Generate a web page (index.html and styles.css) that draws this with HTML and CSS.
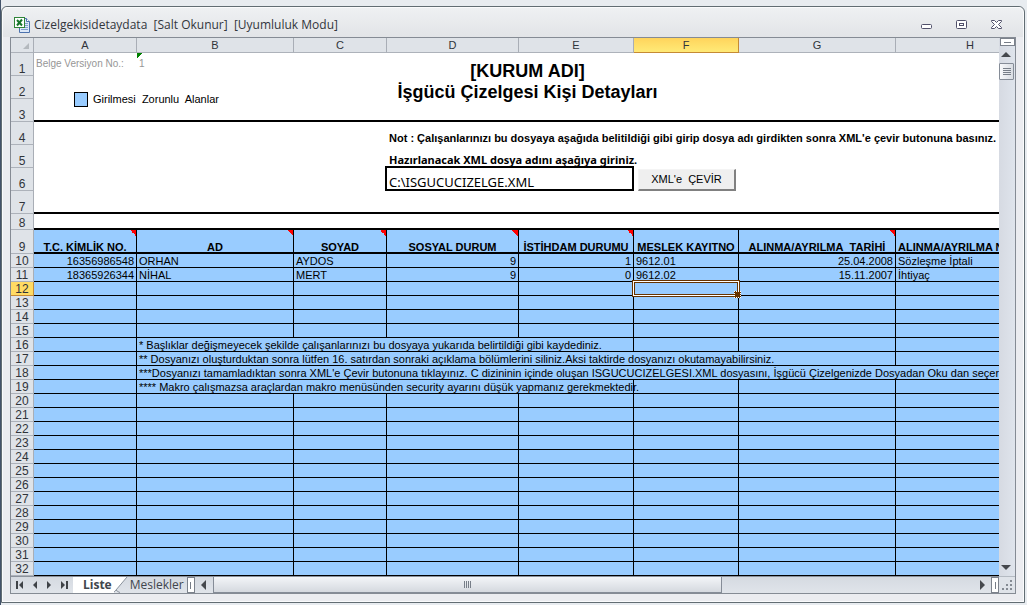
FILE: index.html
```html
<!DOCTYPE html>
<html lang="tr">
<head>
<meta charset="utf-8">
<title>Cizelgekisidetaydata</title>
<link rel="stylesheet" href="styles.css">
</head>
<body>
<main class="window">
  <header class="titlebar">
    <svg class="app-icon" width="16" height="16" viewBox="0 0 16 16" aria-hidden="true">
      <path d="M5.500 1.500H12.500L15.500 4.500V15.500H5.500Z" fill="#dce8f8" stroke="#4c72ad"/>
      <path d="M12.500 1.500V4.500H15.500" fill="#fff" stroke="#4c72ad"/>
      <path d="M11 6.500H14M11 8.500H14M11 10.500H14M7 12.500H14" stroke="#7f9fce"/>
      <rect x=".5" y=".5" width="10" height="10" fill="#fff" stroke="#2f8538"/>
      <path d="M3 3L8 8.500M8 2.500L3 8.500" stroke="#16762a" stroke-width="2"/>
    </svg>
    <h1 class="caption">Cizelgekisidetaydata&nbsp; [Salt Okunur]&nbsp; [Uyumluluk Modu]</h1>
    <div class="window-buttons">
      <button aria-label="Simge durumuna küçült"><svg width="13" height="11" viewBox="0 0 13 11"><rect x="1.500" y="5.500" width="10" height="4" rx="1" fill="#fff" stroke="#50506a"/></svg></button>
      <button aria-label="Önceki boyut"><svg width="13" height="11" viewBox="0 0 13 11"><rect x="1.500" y="1.500" width="10" height="8" rx="1" fill="#fff" stroke="#50506a"/><rect x="4.500" y="4.500" width="4" height="2" fill="#fff" stroke="#50506a"/></svg></button>
      <button aria-label="Kapat"><svg width="13" height="11" viewBox="0 0 13 11"><path d="M1.500 1.500H4.500L6.500 3.500L8.500 1.500H11.500V2.500L8.500 5.500L11.500 8.500V9.500H8.500L6.500 7.500L4.500 9.500H1.500V8.500L4.500 5.500L1.500 2.500Z" fill="#fff" stroke="#50506a"/></svg></button>
    </div>
  </header>

  <section class="workbook">
    <div class="sheet">
      <table class="grid">
        <colgroup><col class="w-num"><col class="w-a"><col class="w-b"><col class="w-c"><col class="w-d"><col class="w-e"><col class="w-f"><col class="w-g"><col class="w-h"></colgroup>
        <thead>
          <tr><th class="corner"><svg width="6" height="6" viewBox="0 0 6 6"><path d="M6 0V6H0Z" fill="#b4b9be"/></svg></th><th>A</th><th>B</th><th>C</th><th>D</th><th>E</th><th class="active">F</th><th>G</th><th>H</th></tr>
        </thead>
        <tbody class="form">
          <tr><th>1</th><td class="version">Belge Versiyon No.:</td><td class="version flagged">1</td><td class="title" colspan="4" rowspan="3">[KURUM ADI]<br>İşgücü Çizelgesi Kişi Detayları</td><td colspan="2"></td></tr>
          <tr><th>2</th><td colspan="2" rowspan="2" class="legend-cell ruled"><div class="legend"><span class="swatch"></span>Girilmesi&nbsp; Zorunlu&nbsp; Alanlar</div></td><td colspan="2"></td></tr>
          <tr class="ruled"><th>3</th><td colspan="2"></td></tr>
          <tr><th>4</th><td colspan="3"></td><td colspan="5" class="note">Not : Çalışanlarınızı bu dosyaya aşağıda belitildiği gibi girip dosya adı girdikten sonra XML'e çevir butonuna basınız.</td></tr>
          <tr><th>5</th><td colspan="3"></td><td colspan="5" class="prompt"><label for="file">Hazırlanacak XML dosya adını aşağıya giriniz.</label></td></tr>
          <tr><th>6</th><td colspan="3"></td><td colspan="2" class="file-cell"><input id="file" class="file" value="C:\ISGUCUCIZELGE.XML"></td><td colspan="3" class="action-cell"><button class="convert">XML'e&nbsp; ÇEVİR</button></td></tr>
          <tr class="ruled"><th>7</th><td colspan="8"></td></tr>
          <tr class="ruled short"><th>8</th><td colspan="8"></td></tr>
        </tbody>
        <tbody class="data">
          <tr class="fields"><th>9</th><td class="comment">T.C. KİMLİK NO.</td><td class="comment">AD</td><td class="comment">SOYAD</td><td class="comment">SOSYAL DURUM</td><td class="comment">İSTİHDAM DURUMU</td><td>MESLEK KAYITNO</td><td class="comment">ALINMA/AYRILMA&nbsp; TARİHİ</td><td class="start">ALINMA/AYRILMA NEDENİ</td></tr>
          <tr><th>10</th><td class="num">16356986548</td><td>ORHAN</td><td>AYDOS</td><td class="num">9</td><td class="num">1</td><td>9612.01</td><td class="num">25.04.2008</td><td>Sözleşme İptali</td></tr>
          <tr><th>11</th><td class="num">18365926344</td><td>NİHAL</td><td>MERT</td><td class="num">9</td><td class="num">0</td><td>9612.02</td><td class="num">15.11.2007</td><td>İhtiyaç</td></tr>
          <tr><th class="active">12</th><td></td><td></td><td></td><td></td><td></td><td class="selected"></td><td></td><td></td></tr>
          <tr><th>13</th><td></td><td></td><td></td><td></td><td></td><td></td><td></td><td></td></tr>
          <tr><th>14</th><td></td><td></td><td></td><td></td><td></td><td></td><td></td><td></td></tr>
          <tr><th>15</th><td></td><td></td><td></td><td></td><td></td><td></td><td></td><td></td></tr>
          <tr><th>16</th><td></td><td colspan="4">* Başlıklar değişmeyecek şekilde çalışanlarınızı bu dosyaya yukarıda belirtildiği gibi kaydediniz.</td><td></td><td></td><td></td></tr>
          <tr><th>17</th><td></td><td colspan="6">** Dosyanızı oluşturduktan sonra lütfen 16. satırdan sonraki açıklama bölümlerini siliniz.Aksi taktirde dosyanızı okutamayabilirsiniz.</td><td></td></tr>
          <tr><th>18</th><td></td><td colspan="7">***Dosyanızı tamamladıktan sonra XML'e Çevir butonuna tıklayınız. C dizininin içinde oluşan ISGUCUCIZELGESI.XML dosyasını, İşgücü Çizelgenizde Dosyadan Oku dan seçerek okutunuz.</td></tr>
          <tr><th>19</th><td></td><td colspan="4">**** Makro çalışmazsa araçlardan makro menüsünden security ayarını düşük yapmanız gerekmektedir.</td><td></td><td></td><td></td></tr>
          <tr><th>20</th><td></td><td></td><td></td><td></td><td></td><td></td><td></td><td></td></tr>
          <tr><th>21</th><td></td><td></td><td></td><td></td><td></td><td></td><td></td><td></td></tr>
          <tr><th>22</th><td></td><td></td><td></td><td></td><td></td><td></td><td></td><td></td></tr>
          <tr><th>23</th><td></td><td></td><td></td><td></td><td></td><td></td><td></td><td></td></tr>
          <tr><th>24</th><td></td><td></td><td></td><td></td><td></td><td></td><td></td><td></td></tr>
          <tr><th>25</th><td></td><td></td><td></td><td></td><td></td><td></td><td></td><td></td></tr>
          <tr><th>26</th><td></td><td></td><td></td><td></td><td></td><td></td><td></td><td></td></tr>
          <tr><th>27</th><td></td><td></td><td></td><td></td><td></td><td></td><td></td><td></td></tr>
          <tr><th>28</th><td></td><td></td><td></td><td></td><td></td><td></td><td></td><td></td></tr>
          <tr><th>29</th><td></td><td></td><td></td><td></td><td></td><td></td><td></td><td></td></tr>
          <tr><th>30</th><td></td><td></td><td></td><td></td><td></td><td></td><td></td><td></td></tr>
          <tr><th>31</th><td></td><td></td><td></td><td></td><td></td><td></td><td></td><td></td></tr>
          <tr><th>32</th><td></td><td></td><td></td><td></td><td></td><td></td><td></td><td></td></tr>
        </tbody>
      </table>
    </div>

    <div class="vscroll">
      <span class="vsplit"></span>
      <button class="varrow" aria-label="Yukarı"><svg width="10" height="5" viewBox="0 0 10 5"><path d="M0 5L5 0L10 5Z" fill="#45484d"/></svg></button>
      <div class="vtrack"><div class="vthumb"><i></i><i></i><i></i><i></i></div></div>
      <button class="varrow" aria-label="Aşağı"><svg width="10" height="5" viewBox="0 0 10 5"><path d="M0 0L5 5L10 0Z" fill="#45484d"/></svg></button>
    </div>

    <footer class="bottom">
      <nav class="tab-nav">
        <button aria-label="İlk sayfa"><svg width="8" height="8" viewBox="0 0 8 8"><path d="M1 0V8" stroke="#3f4348" stroke-width="2"/><path d="M7 0V8L3 4Z" fill="#3f4348"/></svg></button>
        <button aria-label="Önceki sayfa"><svg width="8" height="8" viewBox="0 0 8 8"><path d="M6 0V8L2 4Z" fill="#3f4348"/></svg></button>
        <button aria-label="Sonraki sayfa"><svg width="8" height="8" viewBox="0 0 8 8"><path d="M2 0V8L6 4Z" fill="#3f4348"/></svg></button>
        <button aria-label="Son sayfa"><svg width="8" height="8" viewBox="0 0 8 8"><path d="M1 0V8L5 4Z" fill="#3f4348"/><path d="M7 0V8" stroke="#3f4348" stroke-width="2"/></svg></button>
      </nav>
      <button class="tab current">Liste</button>
      <svg class="slant" width="14" height="16" viewBox="0 0 14 16" aria-hidden="true"><path d="M0 0H13L2 13L0 15Z" fill="#fff"/><path d="M13 0L2 13Q1 14.500 0 15M2 13Q4 15 6 15.500" fill="none" stroke="#8b929c"/></svg>
      <button class="tab">Meslekler</button>
      <span class="hsplit"></span>
      <button class="harrow" aria-label="Sola"><svg width="5" height="10" viewBox="0 0 5 10"><path d="M5 0V10L0 5Z" fill="#45484d"/></svg></button>
      <div class="htrack"><div class="hthumb"><i></i><i></i><i></i><i></i></div></div>
      <button class="harrow" aria-label="Sağa"><svg width="5" height="10" viewBox="0 0 5 10"><path d="M0 0V10L5 5Z" fill="#45484d"/></svg></button>
      <span class="hsplit"></span>
    </footer>
    <div class="grip"><svg width="12" height="12" viewBox="0 0 12 12"><path d="M9 1h2v2h-2zM5 5h2v2h-2zM9 5h2v2h-2zM1 9h2v2h-2zM5 9h2v2h-2zM9 9h2v2h-2z" fill="#858b93"/></svg></div>
  </section>
</main>
</body>
</html>
```

FILE: styles.css
```css
* { box-sizing: border-box; }

body {
  margin: 0;
  padding: 6px 2px 2px 0;
  border-left: 1px solid #43536a;
  background: #e8ecf0;
  font: 11px/13px "Liberation Sans", Arial, sans-serif;
  color: #000;
}

button {
  margin: 0;
  padding: 0;
  border: 0;
  background: none;
  font: inherit;
  color: inherit;
}

svg { display: block; }

.window {
  padding: 0 8px 8px;
  border: 1px solid #626d73;
  border-radius: 6px 6px 0 0;
  background: #ebecf0;
  box-shadow: inset 0 0 0 1px #fafbfc;
}

/* Title bar */
.titlebar {
  display: flex;
  align-items: center;
  gap: 4px;
  height: 30px;
  margin: 0 -7px;
  padding: 5px 20px 0 11px;
  border-radius: 5px 5px 0 0;
  background: linear-gradient(#eff1f3, #e2e4e7);
  box-shadow: inset 0 1px #fafbfc;
}

.caption {
  flex: 1;
  margin: 0;
  font: 12px/16px "Open Sans", "Noto Sans", sans-serif;
  color: #32363c;
  white-space: nowrap;
}

.window-buttons { display: flex; gap: 22px; }

/* Workbook frame */
.workbook {
  display: grid;
  grid-template-columns: minmax(0, 1fr) 16px;
  border: 1px solid #858b94;
  background: #dfe3e9;
}

.sheet { overflow: hidden; background: #fff; }

.grid {
  width: 1034px;
  table-layout: fixed;
  border-collapse: separate;
  border-spacing: 0;
}

.w-num { width: 23px; }
.w-a { width: 103px; }
.w-b, .w-g { width: 157px; }
.w-c { width: 93px; }
.w-d { width: 132px; }
.w-e { width: 115px; }
.w-f { width: 105px; }
.w-h { width: 149px; }

.grid th {
  height: 14px;
  padding: 0;
  border-right: 1px solid #a9aeb6;
  border-bottom: 1px solid #adb2ba;
  background: #dfe3e8;
  font-size: 12px;
  font-weight: normal;
  line-height: 11px;
  color: #30343a;
  vertical-align: bottom;
}

.grid thead th { height: 15px; font-size: 11px; line-height: 14px; }
.grid .corner { padding: 0 4px 3px 0; }
.corner svg { margin-left: auto; }
.grid th.active {
  border-color: #c58a35;
  background: linear-gradient(#ffd45c, #ffea77);
}
.grid tbody th.active { background: #ffdb64; }

.grid td { padding: 0 2px; line-height: 11px; white-space: nowrap; vertical-align: bottom; }

/* Form area */
.form th { height: 23px; }
.form .short th { height: 16px; }
.form .ruled td, .form td.ruled { border-bottom: 2px solid #000; }
.form td.version { padding-bottom: 7px; color: #969696; font-size: 10px; }
.form td.flagged { background: linear-gradient(to bottom right, #008000 50%, transparent 50%) 0 0 / 6px 6px no-repeat; }

.form td.title {
  padding: 8px 0 0 22px;
  border-bottom: 2px solid #000;
  font-size: 18px;
  font-weight: bold;
  line-height: 21px;
  text-align: center;
  vertical-align: top;
}

.form td.legend-cell { padding: 3px 0 0 40px; vertical-align: middle; }
.legend { display: flex; align-items: center; gap: 5px; }
.swatch { width: 14px; height: 15px; border: 1px solid #000; background: #99ccff; }

.form td.note { padding-bottom: 1px; font-weight: bold; }
.form td.prompt { padding-bottom: 2px; font: bold 11px/13px "Noto Sans", "Open Sans", sans-serif; }

.form td.file-cell { padding: 0; }
.file {
  display: block;
  width: 249px;
  height: 25px;
  margin: -2px 0 0 -2px;
  padding: 6px 2px 0;
  border: 2px solid #000;
  border-radius: 0;
  background: #fff;
  font: 13px/16px "Noto Sans", "Open Sans", sans-serif;
  color: #000;
}

.form td.action-cell { padding: 0 0 0 4px; }
.convert {
  display: block;
  width: 98px;
  height: 22px;
  border: 1px solid #f4f4f4;
  border-right: 2px solid #808080;
  border-bottom: 2px solid #808080;
  background: #efefef;
}

/* Data area */
.data td {
  border-right: 1px solid #000;
  border-bottom: 1px solid #000;
  background-color: #99ccff;
}
.data .num { text-align: right; }
.data .fields th { height: 24px; }
.data .fields td {
  border-bottom-width: 2px;
  font-weight: bold;
  line-height: 10px;
  text-align: center;
}
.data .fields .start { text-align: left; }
.data .comment {
  background-image: linear-gradient(to bottom left, #ff0000 50%, transparent 50%);
  background-position: top right;
  background-size: 6px 6px;
  background-repeat: no-repeat;
}

.selected { position: relative; }
.selected::before {
  content: "";
  position: absolute;
  inset: -2px;
  border: 1px solid #663300;
  box-shadow: inset 0 0 0 1px #fff, inset 0 0 0 2px #663300;
}
.selected::after {
  content: "";
  position: absolute;
  right: -3px;
  bottom: -3px;
  width: 5px;
  height: 5px;
  border: 1px dotted #fff;
  background: #663300;
}

/* Vertical scroll bar */
.vscroll {
  display: flex;
  flex-direction: column;
  align-items: center;
  background: linear-gradient(90deg, #d6dae2, #dfe4ec);
}
.vsplit {
  width: 15px;
  height: 8px;
  border: 1px solid #7c828c;
  background: linear-gradient(#777d87, #777d87) center / 7px 1px no-repeat #fff;
}
.varrow { padding: 6px 0; margin-right: 2px; }
.vtrack { flex: 1; align-self: stretch; }
.vthumb {
  display: flex;
  flex-direction: column;
  align-items: center;
  justify-content: center;
  gap: 1px;
  width: 15px;
  height: 17px;
  border: 1px solid #858c97;
  border-radius: 1px;
  background: linear-gradient(90deg, #f7f8fa, #d9dde3);
}
.vthumb i { width: 8px; height: 1px; background: #777e88; }

/* Tabs and horizontal scroll bar */
.bottom {
  display: flex;
  align-items: stretch;
  height: 17px;
  border-top: 1px solid #8b929c;
  background: linear-gradient(#d5dae1, #e0e4ea);
}
.tab-nav {
  display: flex;
  align-items: center;
  justify-content: space-between;
  width: 62px;
  padding: 0 5px;
}
.tab {
  padding: 0 3px 0 2px;
  font: 12px/16px "Open Sans", "Noto Sans", sans-serif;
  color: #41464d;
}
.tab.current {
  padding: 0 2px 0 10px;
  background: #fff;
  font-weight: bold;
}
.hsplit {
  width: 8px;
  border: 1px solid #7c828c;
  background: linear-gradient(#777d87, #777d87) center / 1px 7px no-repeat #fff;
}
.harrow { display: grid; place-items: center; width: 18px; }
.htrack { flex: 1; }
.hthumb {
  display: flex;
  align-items: center;
  justify-content: center;
  gap: 1px;
  width: 67%;
  height: 16px;
  border: 1px solid #858c97;
  border-top: 0;
  background: linear-gradient(#f3f5f8, #d5d9df);
}
.hthumb i { width: 1px; height: 7px; background: #777e88; }

.grip {
  display: grid;
  place-items: center;
  border-top: 1px solid #b4bac2;
}
```
